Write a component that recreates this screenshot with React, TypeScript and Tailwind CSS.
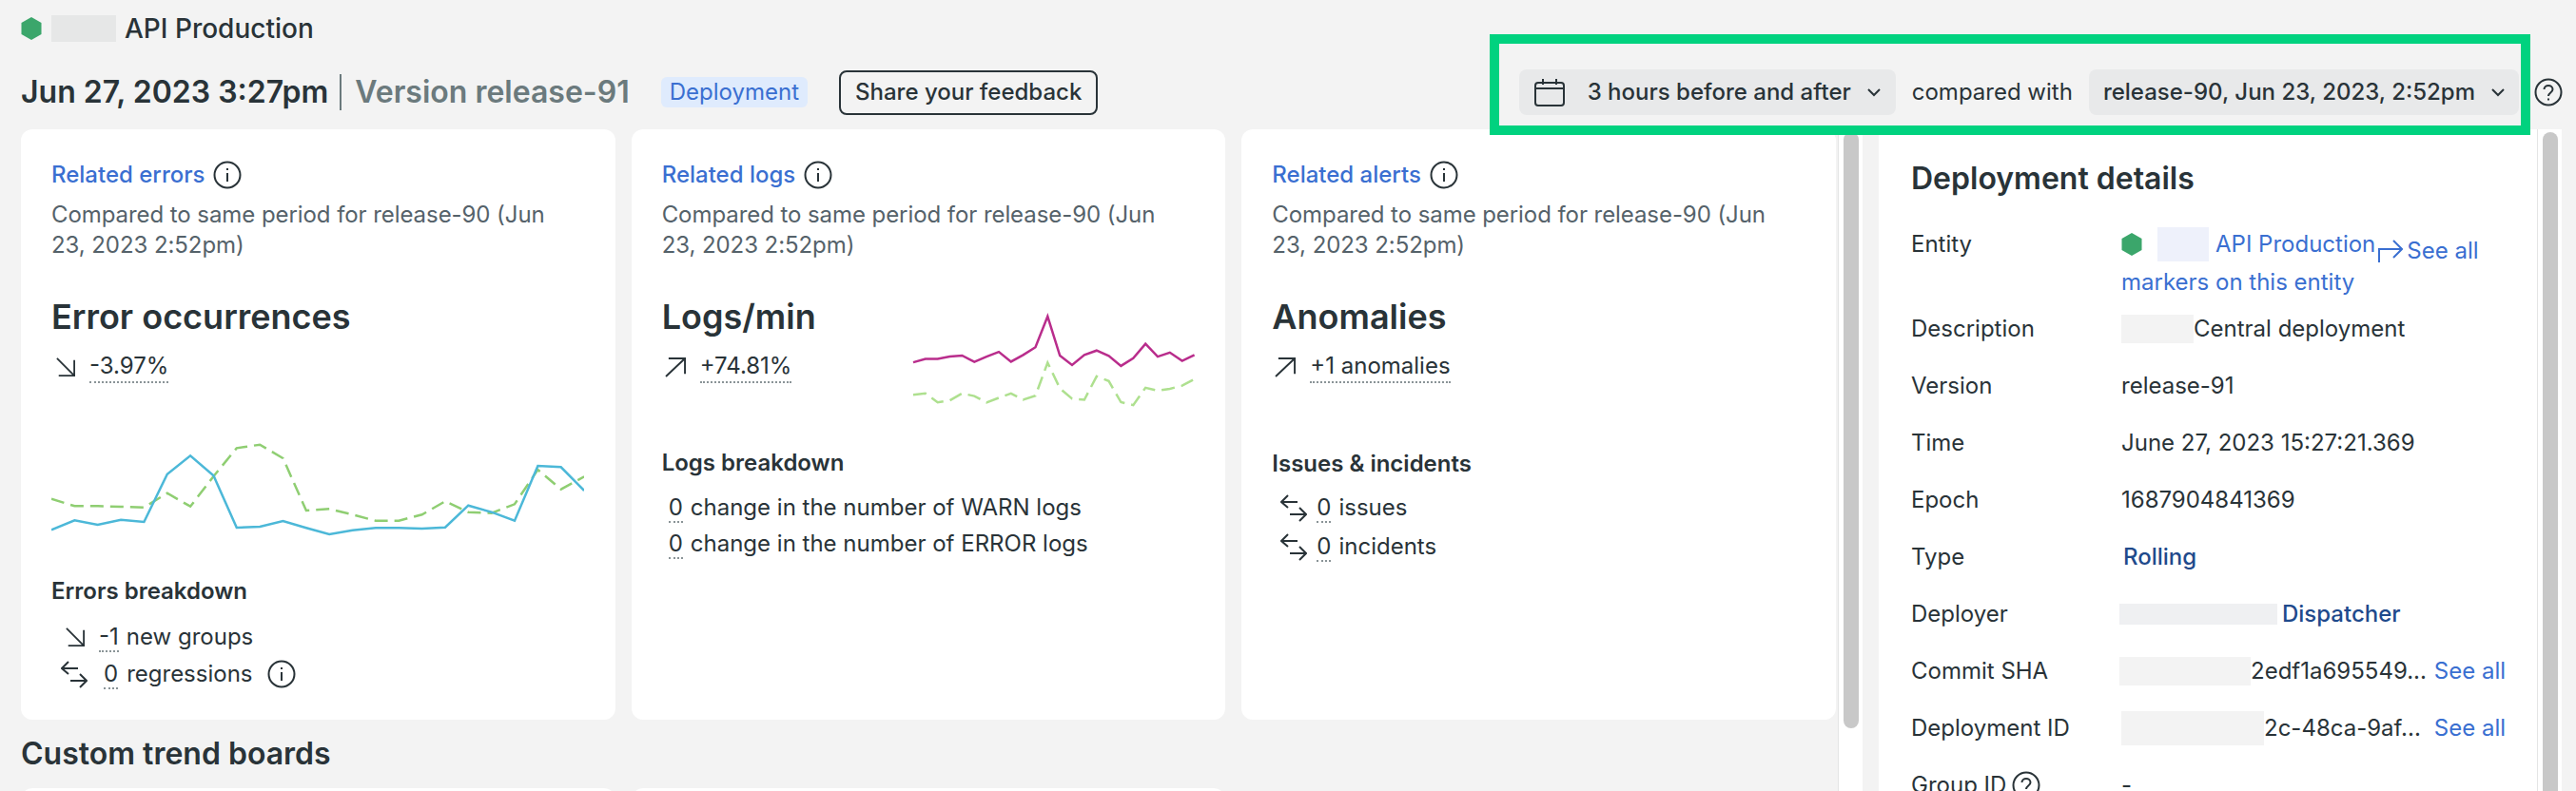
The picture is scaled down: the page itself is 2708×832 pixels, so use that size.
import React from 'react'

const errorLine = [466, 436, 450, 434, 441, 290, 232, 295, 459, 456, 438, 460, 480, 467, 460, 460, 462, 458, 389, 410, 437, 264, 268, 342]
const errorBase = [368, 391, 391, 393, 395, 350, 392, 297, 208, 197, 240, 405, 400, 418, 437, 437, 418, 376, 410, 413, 385, 276, 338, 298]
const logsLine = [287, 277, 277, 270, 267, 286, 270, 256, 285, 265, 242, 150, 267, 295, 265, 252, 268, 298, 275, 232, 270, 258, 283, 265]
const logsBase = [384, 380, 407, 401, 380, 388, 407, 393, 380, 399, 387, 288, 365, 396, 399, 329, 343, 406, 415, 363, 372, 366, 357, 337]

const errorPoints = (vals: number[]) => vals.map((v, i) => `${(i * 24.35).toFixed(1)},${(v / 3 - 50).toFixed(1)}`).join(' ')
const logsPoints = (vals: number[]) => vals.map((v, i) => `${(i * 12.85).toFixed(1)},${(v / 2.84 - 31).toFixed(1)}`).join(' ')

const Hexagon: React.FC<{ className: string }> = ({ className }) => (
  <svg viewBox="0 0 22 24" className={className}>
    <path d="M11 0 L21.5 6 V18 L11 24 L0.5 18 V6 Z" fill="#3ba66b" />
  </svg>
)

const InfoIcon: React.FC = () => (
  <svg viewBox="0 0 30 30" className="w-[30px] h-[30px] shrink-0" fill="none" stroke="#293338">
    <circle cx="15" cy="15" r="13.5" strokeWidth="2" />
    <path d="M15 13 V22" strokeWidth="2" />
    <path d="M15 8 V10" strokeWidth="2" />
  </svg>
)

const HelpIcon: React.FC<{ size: string }> = ({ size }) => (
  <svg viewBox="0 0 30 30" className={size} fill="none" stroke="#293338" strokeWidth="2">
    <circle cx="15" cy="15" r="13.5" />
    <path d="M10.5 12 C10.5 6.5 19.5 6.5 19.5 12 C19.5 15.5 15 15.5 15 19" />
    <path d="M15 21.5 V23.5" />
  </svg>
)

const ArrowDownRight: React.FC = () => (
  <svg viewBox="0 0 24 22" className="w-[22px] h-[20px] shrink-0" fill="none" stroke="#293338" strokeWidth="2">
    <path d="M2 1 L22 21 M22 3 V21 H4" />
  </svg>
)

const ArrowUpRight: React.FC = () => (
  <svg viewBox="0 0 24 22" className="w-[23px] h-[21px] shrink-0" fill="none" stroke="#293338" strokeWidth="2">
    <path d="M1 21 L22 1 M4 1 H22 V18" />
  </svg>
)

const SwapIcon: React.FC = () => (
  <svg viewBox="0 0 28 29" className="w-[28px] h-[29px] shrink-0" fill="none" stroke="#293338" strokeWidth="2">
    <path d="M1 8 H18 M8 1 L1 8 L8 14" />
    <path d="M10 21 H27 M20 14 L27 21 L20 28" />
  </svg>
)

const Chevron: React.FC = () => (
  <svg viewBox="0 0 14 9" className="w-[14px] h-[9px] shrink-0" fill="none" stroke="#293338" strokeWidth="2">
    <path d="M1 1 L7 7 L13 1" />
  </svg>
)

const CalendarIcon: React.FC = () => (
  <svg viewBox="0 0 32 29" className="w-[32px] h-[29px] shrink-0" fill="none" stroke="#293338" strokeWidth="2">
    <rect x="1" y="4" width="30" height="24" rx="3" />
    <path d="M1 10 H31 M9 0 V6 M23 0 V6 M13 4 H19" />
  </svg>
)

const Dotted: React.FC<{ children: React.ReactNode }> = ({ children }) => (
  <span className="border-b-2 border-dotted border-[#8a9497]">{children}</span>
)

const CardHead: React.FC<{ label: string }> = ({ label }) => (
  <>
    <div className="flex items-center gap-[9px] h-[32px]">
      <span className="text-[#3a6fd1] font-medium">{label}</span>
      <InfoIcon />
    </div>
    <p className="mt-[10px] text-[#55626a] tracking-[-0.07px]">Compared to same period for release-90 (Jun 23, 2023 2:52pm)</p>
  </>
)

const Card: React.FC<{ children: React.ReactNode }> = ({ children }) => (
  <div className="bg-white rounded-xl pt-[32px] px-[32px] h-[621px]">{children}</div>
)

const DetailRow: React.FC<{ label: React.ReactNode; children: React.ReactNode; seeAll?: boolean }> = ({ label, children, seeAll }) => (
  <div className="flex items-center h-[60px]">
    <div className="w-[221px] shrink-0 flex items-center gap-[6px]">{label}</div>
    <div className="flex items-center min-w-0">{children}</div>
    {seeAll && <a className="ml-auto text-[#3a6fd1]">See all</a>}
  </div>
)

const Scrollbar: React.FC<{ thumb: string }> = ({ thumb }) => (
  <div className="w-[26px] shrink-0 bg-white border-l border-[#e4e5e5] pl-[5px] pt-[3px]">
    <div className={`w-[16px] rounded-full bg-[#c8c8c8] ${thumb}`} />
  </div>
)

export default function App() {
  return (
    <div className="relative w-[2708px] h-[832px] overflow-hidden bg-[#f3f3f3] text-[#293338] text-[24px] leading-[32px] font-['Inter',sans-serif]">
      <div className="flex items-center h-[60px] pl-[22px]">
        <Hexagon className="w-[22px] h-[24px]" />
        <div className="w-[68px] h-[28px] ml-[10px] bg-[#e6e7e7]" />
        <span className="ml-[9px] text-[28px] font-medium">API Production</span>
      </div>

      <div className="flex items-center justify-between h-[74px] pl-[22px] pr-[14px]">
        <div className="flex items-center">
          <span className="text-[32px] font-semibold">Jun 27, 2023 3:27pm</span>
          <span className="w-[2px] h-[38px] bg-[#6b7a7d] ml-[12px] mr-[14px]" />
          <span className="text-[32px] font-semibold text-[#6b7a7d]">Version release-91</span>
          <span className="ml-[33px] h-[32px] px-[9px] rounded-md bg-[#dfebfd] text-[#3a6fd1] flex items-center">Deployment</span>
          <button className="ml-[33px] h-[47px] px-[15px] rounded-lg border-2 border-[#293338] font-medium">Share your feedback</button>
        </div>
        <div className="flex items-center">
          <div className="flex items-center h-[48px] pl-[16px] pr-[16px] rounded-lg bg-[#e8e9ea]">
            <CalendarIcon />
            <span className="ml-[24px] mr-[17px] font-medium">3 hours before and after</span>
            <Chevron />
          </div>
          <span className="mx-[17px]">compared with</span>
          <div className="flex items-center h-[48px] pl-[15px] pr-[15px] rounded-lg bg-[#e8e9ea]">
            <span className="mr-[17px] font-medium">release-90, Jun 23, 2023, 2:52pm</span>
            <Chevron />
          </div>
          <div className="ml-[16px]">
            <HelpIcon size="w-[30px] h-[30px]" />
          </div>
        </div>
      </div>

      <div className="flex h-[698px] pt-[2px]">
        <div className="w-[1932px] shrink-0 pl-[22px] pr-[2px] overflow-hidden">
          <div className="grid grid-cols-3 gap-[17px]">
            <Card>
              <CardHead label="Related errors" />
              <h3 className="mt-[37px] text-[36px] leading-[44px] font-semibold">Error occurrences</h3>
              <div className="mt-[14px] flex items-center gap-[14px] pl-[4px]">
                <ArrowDownRight />
                <Dotted>-3.97%</Dotted>
              </div>
              <svg viewBox="0 0 560 130" className="mt-[49px] w-[560px] h-[130px]" fill="none" strokeWidth="2.5">
                <polyline points={errorPoints(errorBase)} stroke="#8fce72" strokeDasharray="14 7" />
                <polyline points={errorPoints(errorLine)} stroke="#4cb8d8" />
              </svg>
              <div className="mt-[24px] font-semibold">Errors breakdown</div>
              <div className="mt-[16px] flex items-center pl-[14px]">
                <ArrowDownRight />
                <span className="ml-[14px]"><Dotted>-1</Dotted></span>
                <span className="ml-[8px]">new groups</span>
              </div>
              <div className="mt-[7px] flex items-center pl-[10px]">
                <SwapIcon />
                <span className="ml-[17px]"><Dotted>0</Dotted></span>
                <span className="ml-[9px]">regressions</span>
                <span className="ml-[15px]"><InfoIcon /></span>
              </div>
            </Card>

            <Card>
              <CardHead label="Related logs" />
              <div className="mt-[37px] flex justify-between h-[90px]">
                <div>
                  <h3 className="text-[36px] leading-[44px] font-semibold">Logs/min</h3>
                  <div className="mt-[14px] flex items-center gap-[14px] pl-[3px]">
                    <ArrowUpRight />
                    <Dotted>+74.81%</Dotted>
                  </div>
                </div>
                <svg viewBox="0 0 296 120" className="w-[296px] h-[120px] overflow-visible" fill="none" strokeWidth="2.5">
                  <polyline points={logsPoints(logsBase)} stroke="#aee08f" strokeDasharray="14 7" />
                  <polyline points={logsPoints(logsLine)} stroke="#b92d8c" />
                </svg>
              </div>
              <div className="mt-[70px] font-semibold">Logs breakdown</div>
              <div className="mt-[15px] pl-[7px]"><Dotted>0</Dotted><span className="ml-[8px]">change in the number of WARN logs</span></div>
              <div className="mt-[6px] pl-[7px]"><Dotted>0</Dotted><span className="ml-[8px]">change in the number of ERROR logs</span></div>
            </Card>

            <Card>
              <CardHead label="Related alerts" />
              <h3 className="mt-[37px] text-[36px] leading-[44px] font-semibold">Anomalies</h3>
              <div className="mt-[14px] flex items-center gap-[14px] pl-[3px]">
                <ArrowUpRight />
                <Dotted>+1 anomalies</Dotted>
              </div>
              <div className="mt-[69px] font-semibold">Issues &amp; incidents</div>
              <div className="mt-[14px] flex items-center pl-[9px]">
                <SwapIcon />
                <span className="ml-[10px]"><Dotted>0</Dotted></span>
                <span className="ml-[8px]">issues</span>
              </div>
              <div className="mt-[9px] flex items-center pl-[9px]">
                <SwapIcon />
                <span className="ml-[10px]"><Dotted>0</Dotted></span>
                <span className="ml-[8px]">incidents</span>
              </div>
            </Card>
          </div>

          <h2 className="mt-[15px] text-[32px] leading-[42px] font-semibold">Custom trend boards</h2>
          <div className="mt-[15px] grid grid-cols-3 gap-[17px]">
            <div className="h-[60px] bg-white rounded-xl" />
            <div className="h-[60px] bg-white rounded-xl" />
          </div>
        </div>

        <Scrollbar thumb="h-[627px]" />

        <div className="w-[692px] shrink-0 ml-[17px] bg-white pt-[30px] pl-[34px] pr-[33px] overflow-hidden">
          <h2 className="text-[32px] leading-[44px] font-semibold">Deployment details</h2>
          <div className="mt-[27px] flex leading-[40px] h-[79px]">
            <div className="w-[221px] shrink-0">Entity</div>
            <div className="text-[#3a6fd1]">
              <div className="flex items-center h-[40px]">
                <Hexagon className="w-[22px] h-[24px]" />
                <div className="w-[54px] h-[36px] ml-[16px] bg-[#eef1fb]" />
                <span className="ml-[7px]">API Production</span>
                <svg viewBox="0 0 26 26" className="w-[26px] h-[26px] ml-[3px] mt-[12px] shrink-0" fill="none" stroke="#3a6fd1" strokeWidth="2">
                  <path d="M1 26 V12 H24 M16 3 L25 12 L16 21" />
                </svg>
                <span className="ml-[4px] mt-[14px]">See all</span>
              </div>
              <div>markers on this entity</div>
            </div>
          </div>
          <DetailRow label="Description">
            <div className="w-[76px] h-[30px] bg-[#f3f3f3]" />
            <span>Central deployment</span>
          </DetailRow>
          <DetailRow label="Version">release-91</DetailRow>
          <DetailRow label="Time">June 27, 2023 15:27:21.369</DetailRow>
          <DetailRow label="Epoch">1687904841369</DetailRow>
          <DetailRow label="Type"><span className="ml-[2px] font-medium text-[#1f4a8c]">Rolling</span></DetailRow>
          <DetailRow label="Deployer">
            <div className="w-[166px] h-[22px] -ml-[2px] bg-[#eff0f2]" />
            <span className="ml-[5px] font-medium text-[#1f4a8c]">Dispatcher</span>
          </DetailRow>
          <DetailRow label="Commit SHA" seeAll>
            <div className="w-[138px] h-[30px] -ml-[2px] bg-[#f3f3f3]" />
            <span className="whitespace-nowrap">2edf1a695549...</span>
          </DetailRow>
          <DetailRow label="Deployment ID" seeAll>
            <div className="w-[150px] h-[36px] bg-[#f3f3f3]" />
            <span className="whitespace-nowrap">2c-48ca-9af...</span>
          </DetailRow>
          <DetailRow label={<>Group ID <HelpIcon size="w-[30px] h-[30px]" /></>}>-</DetailRow>
        </div>

        <Scrollbar thumb="h-[800px]" />
      </div>

      {/* annotation drawn over the screenshot */}
      <div className="absolute left-[1566px] top-[36px] w-[1094px] h-[106px] border-[10px] border-[#00d27f] z-20" />
    </div>
  )
}
